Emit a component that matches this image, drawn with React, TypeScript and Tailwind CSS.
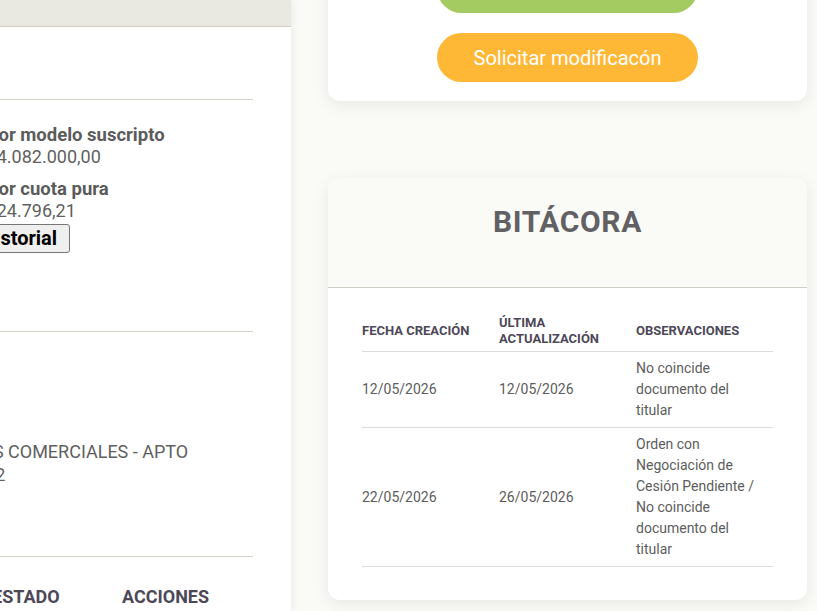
export default function App() {
  const rows = [
    {
      id: "r1",
      created: "12/05/2026",
      updated: "12/05/2026",
      notes: "No coincide documento del titular",
    },
    {
      id: "r2",
      created: "22/05/2026",
      updated: "26/05/2026",
      notes: "Orden con Negociación de Cesión Pendiente / No coincide documento del titular",
    },
  ];

  return (
    <main
      className="h-[611px] w-[817px] overflow-hidden bg-[#fafaf6] flex"
      style={{ fontFamily: "Roboto, 'Liberation Sans', sans-serif" }}
    >
      {/* left panel, clipped by the viewport */}
      <section className="w-[291px] h-full shrink-0 bg-white overflow-hidden shadow-[2px_0_8px_rgba(0,0,0,0.06)]">
        <div className="h-[27px] bg-[#e9e8e1] border-b border-[#cfcdc2]" />
        <div className="ml-[-28px] pr-[38px]">
          <div className="h-[72px]" />
          <div className="border-t border-[#d3d2c8] pt-[24px] pb-[78px]">
            <p className="text-[18.5px] leading-[22px] font-bold text-[#5b5b5b] whitespace-nowrap">
              Valor modelo suscripto
            </p>
            <p className="text-[18px] leading-[22px] text-[#5f5f5f] whitespace-nowrap">$ 34.082.000,00</p>
            <p className="mt-[10px] text-[18.5px] leading-[22px] font-bold text-[#5b5b5b] whitespace-nowrap">
              Valor cuota pura
            </p>
            <p className="text-[18px] leading-[22px] text-[#5f5f5f] whitespace-nowrap">$ 124.796,21</p>
            <button className="mt-[2px] ml-[-4px] px-[12px] py-[3px] text-[20px] leading-[21px] font-bold text-black bg-[#efefef] border border-[#767676] rounded-[3px]">
              Historial
            </button>
          </div>
          <div className="border-t border-[#d3d2c8] pt-[108px] pb-[70px] text-[18px] leading-[23px] text-[#5f5f5f] whitespace-nowrap">
            <p className="ml-[-44px]">LOCALES COMERCIALES - APTO</p>
            <p className="ml-[3px]">302</p>
          </div>
          <div className="border-t border-[#d3d2c8] pt-[29px] flex text-[18px] leading-[22px] font-bold text-[#4d4858]">
            <span className="ml-[20px] w-[130px]">ESTADO</span>
            <span>ACCIONES</span>
          </div>
        </div>
      </section>

      {/* right column */}
      <section className="flex-1 pl-[37px] pr-[10px] mt-[-56px] flex flex-col">
        <div className="bg-white rounded-[12px] shadow-[0_4px_16px_rgba(0,0,0,0.08)] pt-[20px] pb-[19px] flex flex-col items-center gap-[20px]">
          <button className="w-[261px] h-[49px] rounded-full bg-[#a3cb62] text-white text-[20px]">
            Confirmar
          </button>
          <button className="w-[261px] h-[49px] rounded-full bg-[#ffb835] text-white text-[20px]">
            Solicitar modificacón
          </button>
        </div>

        <div className="mt-[77px] bg-white rounded-[12px] shadow-[0_4px_16px_rgba(0,0,0,0.08)] overflow-hidden">
          <div className="h-[110px] bg-[#fafaf6] border-b border-[#d0cfc6] flex items-start justify-center pt-[26px]">
            <h2 className="text-[30px] leading-[36px] font-bold tracking-[0.02em] text-[#616164]">BITÁCORA</h2>
          </div>
          <div className="px-[34px] pt-[23px] pb-[33px]">
            <table className="w-full table-fixed border-collapse">
              <thead>
                <tr className="border-b border-[#dcdcdc] text-left text-[13px] leading-[16px] font-bold text-[#4d4858]">
                  <th className="py-[4px] align-middle">FECHA CREACIÓN</th>
                  <th className="py-[4px] align-middle">
                    ÚLTIMA
                    <br />
                    ACTUALIZACIÓN
                  </th>
                  <th className="py-[4px] align-middle">OBSERVACIONES</th>
                </tr>
              </thead>
              <tbody>
                {rows.map((row) => (
                  <tr key={row.id} className="border-b border-[#dcdcdc] text-[14px] leading-[21px] text-[#5d5d5d]">
                    <td className="py-[6px] align-middle">{row.created}</td>
                    <td className="py-[6px] align-middle">{row.updated}</td>
                    <td className="py-[6px] align-middle pr-[14px]">{row.notes}</td>
                  </tr>
                ))}
              </tbody>
            </table>
          </div>
        </div>
      </section>
    </main>
  );
}
